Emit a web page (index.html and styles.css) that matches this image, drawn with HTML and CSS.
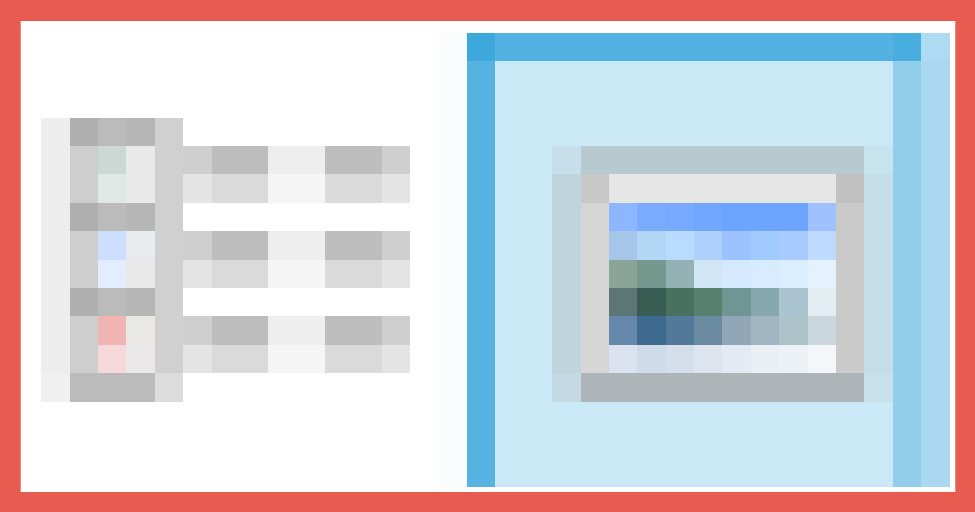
FILE: index.html
```html
<!DOCTYPE html>
<html lang="en">
<head>
<meta charset="utf-8">
<title>View switcher</title>
<link rel="stylesheet" href="styles.css">
</head>
<body>
<main class="frame">
  <div class="switcher">
    <div class="option">
      <svg class="icon" width="369" height="284" viewBox="41 118 369 284" shape-rendering="crispEdges" aria-hidden="true">
        <!-- thumbnail column -->
        <path fill="#ededed" d="M41 118h29v255h-29z"/>
        <path fill="#f0f0f0" d="M41 373h29v29h-29z"/>
        <path fill="#cecece" d="M70 146h28v227h-28z"/>
        <path fill="#e9e9e9" d="M126 146h29v227h-29z"/>
        <path fill="#e8eaed" d="M126 231h29v29h-29z"/>
        <path fill="#e9e8e5" d="M126 316h29v29h-29z"/>
        <path fill="#eae8e9" d="M126 345h29v28h-29z"/>
        <path fill="#d0d0d0" d="M155 118h28v255h-28z"/>
        <path fill="#dcdcdc" d="M155 373h28v29h-28z"/>
        <path fill="#afafaf" d="M70 118h28v28h-28zM70 203h28v28h-28zM70 288h28v28h-28z"/>
        <path fill="#bbb" d="M98 118h28v28h-28zM98 203h28v28h-28zM98 288h28v28h-28zM70 373h85v29h-85z"/>
        <path fill="#b6b6b6" d="M126 118h29v28h-29zM126 203h29v28h-29zM126 288h29v28h-29z"/>
        <path fill="#ccd8d4" d="M98 146h28v28h-28z"/>
        <path fill="#dfe8e5" d="M98 174h28v29h-28z"/>
        <path fill="#ccdfff" d="M98 231h28v29h-28z"/>
        <path fill="#e2eeff" d="M98 260h28v28h-28z"/>
        <path fill="#f0b4b4" d="M98 316h28v29h-28z"/>
        <path fill="#f7d8da" d="M98 345h28v28h-28z"/>
        <!-- text lines -->
        <path fill="#cfcfcf" d="M183 146h29v28h-29zM183 231h29v29h-29zM183 316h29v29h-29zM382 146h28v28h-28zM382 231h28v29h-28zM382 316h28v29h-28z"/>
        <path fill="#bdbdbd" d="M212 146h56v28h-56zM212 231h56v29h-56zM212 316h56v29h-56zM325 146h57v28h-57zM325 231h57v29h-57zM325 316h57v29h-57z"/>
        <path fill="#eee" d="M268 146h57v28h-57zM268 231h57v29h-57zM268 316h57v29h-57z"/>
        <path fill="#e4e4e4" d="M183 174h29v29h-29zM183 260h29v28h-29zM183 345h29v28h-29zM382 174h28v29h-28zM382 260h28v28h-28zM382 345h28v28h-28z"/>
        <path fill="#dadada" d="M212 174h56v29h-56zM212 260h56v28h-56zM212 345h56v28h-56zM325 174h57v29h-57zM325 260h57v28h-57zM325 345h57v28h-57z"/>
        <path fill="#f5f5f5" d="M268 174h57v29h-57zM268 260h57v28h-57zM268 345h57v28h-57z"/>
      </svg>
    </div>
    <div class="option-selected">
      <div class="halo"></div>
      <div class="corner-left"></div>
      <div class="edge-top"></div>
      <div class="corner-right"></div>
      <div class="rim-top"></div>
      <div class="edge-left"></div>
      <div class="face">
        <svg class="icon" width="341" height="256" viewBox="552 146 341 256" shape-rendering="crispEdges" aria-hidden="true">
          <!-- picture frame -->
          <path fill="#c6dfea" d="M552 146h29v28h-29z"/>
          <path fill="#bfd4dd" d="M552 174h29v199h-29z"/>
          <path fill="#c3d9e4" d="M552 373h29v29h-29z"/>
          <path fill="#b8c9cf" d="M581 146h283v28h-283z"/>
          <path fill="#c7e3ee" d="M864 146h29v28h-29z"/>
          <path fill="#c5dde8" d="M864 174h29v199h-29z"/>
          <path fill="#c8e0ea" d="M864 373h29v29h-29z"/>
          <path fill="#c8c8c8" d="M581 174h28v29h-28z"/>
          <path fill="#e6e6e6" d="M609 174h227v29h-227z"/>
          <path fill="#c0c0c0" d="M836 174h28v29h-28z"/>
          <path fill="#d6d6d6" d="M581 203h28v170h-28z"/>
          <path fill="#cacaca" d="M836 203h28v170h-28z"/>
          <path fill="#adb5b8" d="M581 373h283v29h-283z"/>
          <!-- sky -->
          <path fill="#8cb6ff" d="M609 203h28v28h-28z"/>
          <path fill="#79acff" d="M637 203h29v28h-29z"/>
          <path fill="#77aaff" d="M666 203h28v28h-28z"/>
          <path fill="#72a7ff" d="M694 203h28v28h-28z"/>
          <path fill="#6da4ff" d="M722 203h86v28h-86z"/>
          <path fill="#9fc2ff" d="M808 203h28v28h-28z"/>
          <path fill="#a5c6e9" d="M609 231h28v29h-28z"/>
          <path fill="#b2d6f3" d="M637 231h29v29h-29z"/>
          <path fill="#b8dbff" d="M666 231h28v29h-28z"/>
          <path fill="#aed1ff" d="M694 231h28v29h-28z"/>
          <path fill="#9ac3ff" d="M722 231h29v29h-29z"/>
          <path fill="#a1caff" d="M751 231h28v29h-28z"/>
          <path fill="#a8cbff" d="M779 231h29v29h-29z"/>
          <path fill="#bfdaff" d="M808 231h28v29h-28z"/>
          <!-- hills -->
          <path fill="#8aa598" d="M609 260h28v28h-28z"/>
          <path fill="#75998f" d="M637 260h29v28h-29z"/>
          <path fill="#94b1b3" d="M666 260h28v28h-28z"/>
          <path fill="#d1e6f4" d="M694 260h28v28h-28z"/>
          <path fill="#d4e9ff" d="M722 260h29v28h-29z"/>
          <path fill="#d8ecff" d="M751 260h28v28h-28z"/>
          <path fill="#dbeeff" d="M779 260h29v28h-29z"/>
          <path fill="#e4f2ff" d="M808 260h28v28h-28z"/>
          <path fill="#5d7676" d="M609 288h28v28h-28z"/>
          <path fill="#385b52" d="M637 288h29v28h-29z"/>
          <path fill="#49715f" d="M666 288h28v28h-28z"/>
          <path fill="#58806e" d="M694 288h28v28h-28z"/>
          <path fill="#6f9692" d="M722 288h29v28h-29z"/>
          <path fill="#85a7ad" d="M751 288h28v28h-28z"/>
          <path fill="#aac5d1" d="M779 288h29v28h-29z"/>
          <path fill="#e3eef3" d="M808 288h28v28h-28z"/>
          <!-- water -->
          <path fill="#6587aa" d="M609 316h28v29h-28z"/>
          <path fill="#3e6a90" d="M637 316h29v29h-29z"/>
          <path fill="#52799a" d="M666 316h28v29h-28z"/>
          <path fill="#6b8ba1" d="M694 316h28v29h-28z"/>
          <path fill="#91a7b8" d="M722 316h29v29h-29z"/>
          <path fill="#a1b6c3" d="M751 316h28v29h-28z"/>
          <path fill="#adc3ca" d="M779 316h29v29h-29z"/>
          <path fill="#cad8dd" d="M808 316h28v29h-28z"/>
          <path fill="#d9e2ee" d="M609 345h28v28h-28z"/>
          <path fill="#cedce9" d="M637 345h29v28h-29z"/>
          <path fill="#d4dfeb" d="M666 345h28v28h-28z"/>
          <path fill="#dde4ee" d="M694 345h28v28h-28z"/>
          <path fill="#e4eaf4" d="M722 345h29v28h-29z"/>
          <path fill="#eaeff4" d="M751 345h28v28h-28z"/>
          <path fill="#ecf1f6" d="M779 345h29v28h-29z"/>
          <path fill="#f3f7fa" d="M808 345h28v28h-28z"/>
        </svg>
      </div>
      <div class="edge-right"></div>
      <div class="rim"></div>
    </div>
  </div>
</main>
</body>
</html>
```
FILE: styles.css
```css
body {
  margin: 0;
}

.frame {
  box-sizing: border-box;
  width: 975px;
  height: 512px;
  padding: 21px 19px 20px 20px;
  background: #e85b50;
}

.switcher {
  box-sizing: border-box;
  display: flex;
  justify-content: space-between;
  width: 936px;
  height: 471px;
  padding: 12px 5px 5px 20px;
  border: solid #ee8980;
  border-width: 0 1px;
  background: #fff;
}

.option {
  padding-top: 85px;
}

.icon {
  display: block;
}

.option-selected {
  display: grid;
  grid-template-columns: 28px 28px 398px 28px 29px;
  grid-template-rows: 28px 426px;
}

.halo {
  grid-row: span 2;
  background: #f9fdff;
}

.corner-left {
  background: #3da8dc;
}

.edge-top {
  background: #53b2e3;
}

.corner-right {
  background: #48addf;
}

.rim-top {
  background: #addbf2;
}

.edge-left {
  background: #55b2e1;
}

.face {
  padding: 85px 0 0 57px;
  background: #cbe8f6;
}

.edge-right {
  background: #92ceeb;
}

.rim {
  background: #a9d8f0;
}
```
